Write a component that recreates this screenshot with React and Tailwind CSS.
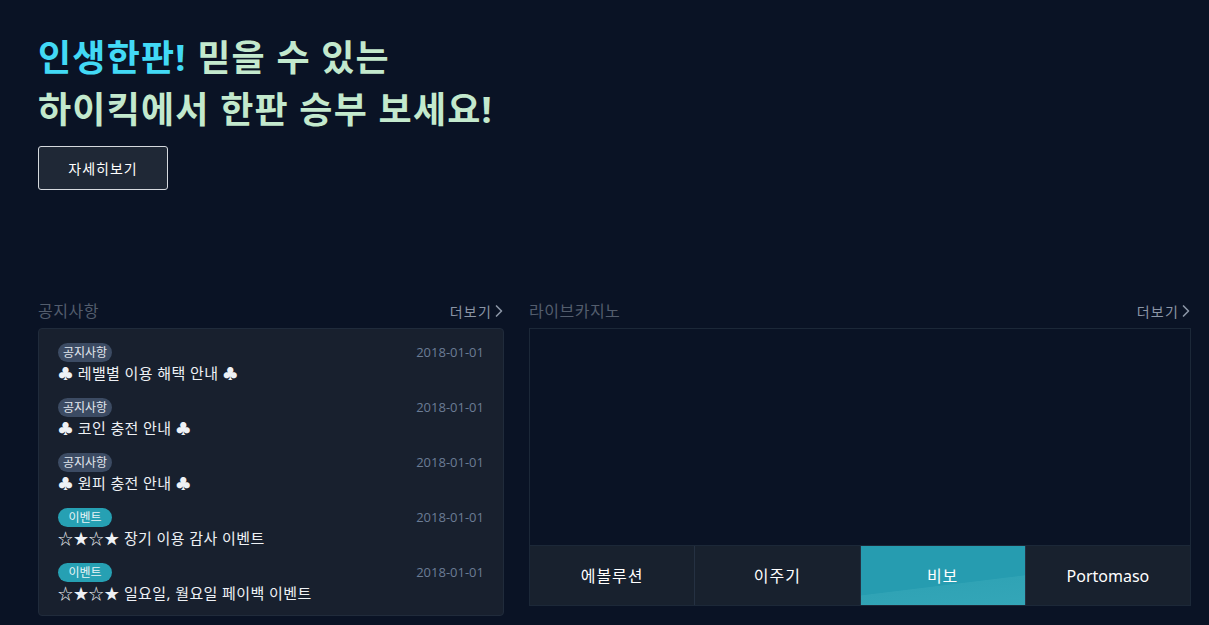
import { ChevronRight } from "lucide-react";

const notices = [
  { tag: "공지사항", type: "notice", title: "♣ 레밸별 이용 해택 안내 ♣", date: "2018-01-01" },
  { tag: "공지사항", type: "notice", title: "♣ 코인 충전 안내 ♣", date: "2018-01-01" },
  { tag: "공지사항", type: "notice", title: "♣ 원피 충전 안내 ♣", date: "2018-01-01" },
  { tag: "이벤트", type: "event", title: "☆★☆★ 장기 이용 감사 이벤트", date: "2018-01-01" },
  { tag: "이벤트", type: "event", title: "☆★☆★ 일요일, 월요일 페이백 이벤트", date: "2018-01-01" },
];

const tabs = ["에볼루션", "이주기", "비보", "Portomaso"];

function SectionHeader({ title }) {
  return (
    <div className="flex items-center justify-between h-[22px] mb-[6px]">
      <span className="text-[16px] tracking-[0.5px] text-[#535d6d]">{title}</span>
      <span className="flex items-center text-[14px] tracking-[1.2px] text-[#8b95a5]">
        더보기
        <ChevronRight size={20} strokeWidth={2} className="-ml-[3px] -mr-[5px]" />
      </span>
    </div>
  );
}

function NoticeItem({ tag, type, title, date }) {
  const badge = type === "event" ? "bg-[#26a0b3] text-[#e6f4f6]" : "bg-[#3c4b63] text-[#e3e8ef]";
  return (
    <div className="mb-[14px]">
      <div className="flex items-center justify-between h-[19px]">
        <span className={`${badge} w-[54px] text-center text-[12px] leading-[19px] rounded-full`}>{tag}</span>
        <span className="text-[13px] text-[#6b7c95]" style={{ fontFamily: '"Open Sans", sans-serif' }}>{date}</span>
      </div>
      <p className="text-[15px] leading-[22px] tracking-[0.4px] text-[#eef1f5]">{title}</p>
    </div>
  );
}

export default function App() {
  return (
    <div
      className="min-h-[625px] bg-[#0a1325] pl-[38px] pt-[32px] overflow-hidden"
      style={{ fontFamily: '"Noto Sans", "Noto Sans CJK KR", sans-serif' }}
    >
      <h1 className="text-[36px] leading-[52px] font-bold text-[#c3e9cd] tracking-[1.2px]">
        <span className="text-[#42d9f5]">인생한판!</span> 믿을 수 있는
        <br />
        하이킥에서 한판 승부 보세요!
      </h1>
      <button className="mt-[10px] w-[130px] h-[44px] rounded-[3px] border border-[#d5d9de] bg-[#1f2836] text-[14px] tracking-[1px] text-white">
        자세히보기
      </button>

      <div className="flex gap-[25px] mt-[110px]">
        <div className="w-[466px]">
          <SectionHeader title="공지사항" />
          <div className="h-[288px] rounded-[4px] border border-[#202b3b] bg-[#18202e] pl-[19px] pr-[19px] pt-[14px]">
            {notices.map((n, i) => (
              <NoticeItem key={i} {...n} />
            ))}
          </div>
        </div>

        <div className="w-[662px]">
          <SectionHeader title="라이브카지노" />
          <div className="h-[278px] border border-[#1c2838] flex flex-col">
            <div className="flex-1" />
            <div className="flex h-[60px] border-t border-[#1c2838]">
              {tabs.map((t, i) => {
                const track = t === "Portomaso" ? "" : "tracking-[1px]";
                return t === "비보" ? (
                  <div
                    key={t}
                    className={`flex-1 flex items-center justify-center text-[16px] ${track} text-white border-l border-[#253142]`}
                    style={{ background: "linear-gradient(173deg, #269cb0 0%, #269cb0 62%, #30a3b5 63%, #34a6b8 100%)" }}
                  >
                    {t}
                  </div>
                ) : (
                  <div
                    key={t}
                    className={`flex-1 flex items-center justify-center text-[16px] ${track} text-white bg-[#18212e] ${i > 0 ? "border-l border-[#253142]" : ""}`}
                  >
                    {t}
                  </div>
                );
              })}
            </div>
          </div>
        </div>
      </div>
    </div>
  );
}
